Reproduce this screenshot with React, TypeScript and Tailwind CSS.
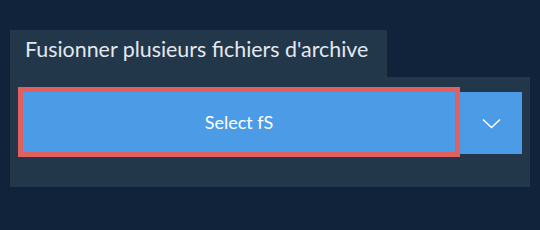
export default function App() {
  return (
    <div className="h-[230px] w-[540px] bg-[#11233a] px-[10px] pt-[30px] font-['Lato','Liberation_Sans',sans-serif]">
      <div className="flex h-[47px] w-[377px] items-start bg-[#23374b] pl-[15px] pt-[7px]">
        <span className="text-[21.4px] leading-[1.2] text-[#e3e8ee]">
          Fusionner plusieurs fichiers d'archive
        </span>
      </div>

      <div className="flex h-[110px] w-[520px] items-start bg-[#23374b] pl-[13px] pt-[15px]">
        <button
          type="button"
          className="flex h-[60px] w-[432px] items-center justify-center bg-[#4c9be7] pt-[1px] text-[18px] leading-[1.2] text-white outline-[5px] outline-solid outline-[#e0605f]"
        >
          Select fS
        </button>
        <button
          type="button"
          className="ml-[5px] flex h-[62px] w-[62px] items-center justify-center bg-[#4c9be7] text-white"
        >
          <svg width="19" height="11" viewBox="0 0 19 11" fill="none">
            <path d="M1 1.5 L9.5 9.5 L18 1.5" stroke="white" strokeWidth="1.5" />
          </svg>
        </button>
      </div>
    </div>
  );
}
